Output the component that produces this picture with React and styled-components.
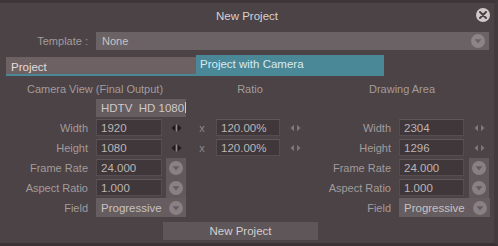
import React from "react";
import styled, { createGlobalStyle } from "styled-components";

const Global = createGlobalStyle`
  html, body { margin: 0; padding: 0; background: #3c3436; }
  body { font-family: "Liberation Sans", Arial, sans-serif; }
`;

const Window = styled.div`
  width: 498px;
  height: 246px;
  box-sizing: border-box;
  background: #4b4345;
  border-top: 3px solid #3d3537;
  border-right: 4px solid #423a3c;
  border-bottom: 3px solid #3a3234;
  display: flex;
  flex-direction: column;
  font-size: 11px;
  color: #a39b9c;
  overflow: hidden;
  & > * { flex-shrink: 0; }
`;

const TitleBar = styled.div`
  height: 25px;
  display: flex;
  align-items: center;
  justify-content: center;
  position: relative;
  color: #d8d0d0;
  font-size: 11.5px;
`;

const CloseBtn = styled.div`
  position: absolute;
  right: 4px;
  top: 5px;
  width: 14px;
  height: 14px;
  border-radius: 50%;
  background: #cfc9ca;
  display: flex;
  align-items: center;
  justify-content: center;
`;

const TemplateRow = styled.div`
  display: flex;
  align-items: center;
  height: 18px;
  margin-top: 4px;
`;

const Label = styled.div`
  width: ${(p) => p.$w || 96}px;
  box-sizing: border-box;
  padding-right: 8px;
  text-align: right;
  white-space: nowrap;
  color: #a39b9c;
`;

const TemplateField = styled.div`
  width: 393px;
  height: 18px;
  background: #6a6264;
  color: #c9c1c1;
  display: flex;
  align-items: center;
  justify-content: space-between;
  padding: 0 4px 0 6px;
  box-sizing: border-box;
`;

const Tabs = styled.div`
  display: flex;
  margin: 7px 0 0 6px;
  height: 19px;
`;

const Tab = styled.div`
  width: ${(p) => p.$w}px;
  box-sizing: border-box;
  display: flex;
  align-items: ${(p) => (p.$active ? "center" : "flex-end")};
  padding: ${(p) => (p.$active ? "0 0 2px 4px" : "0 0 1px 5px")};
  background: ${(p) => (p.$active ? "#4a8797" : "#6d6163")};
  color: ${(p) => (p.$active ? "#d6ebf1" : "#e4dcdc")};
  border-bottom: 2px solid #4a8797;
  font-size: 11.5px;
  margin-top: ${(p) => (p.$active ? "-2px" : "0")};
  height: ${(p) => (p.$active ? "21px" : "19px")};
`;

const Form = styled.div`
  display: grid;
  grid-template-columns: 96px 66px 28px 26px 64px 30px 89px 65px 30px;
  grid-auto-rows: 17px;
  grid-template-rows: 14px;
  row-gap: 3px;
  margin-top: 6px;
  align-items: center;
`;

const Header = styled.div`
  grid-column: ${(p) => p.$col};
  text-align: center;
  color: #a39b9c;
  white-space: nowrap;
`;

const FieldLabel = styled.div`
  grid-column: ${(p) => p.$col};
  text-align: right;
  padding-right: 8px;
  white-space: nowrap;
`;

const Input = styled.div`
  grid-column: ${(p) => p.$col};
  height: 17px;
  box-sizing: border-box;
  background: #3f3739;
  border: 1px solid #554d4f;
  border-top-color: #5e5658;
  color: #bdb5b5;
  display: flex;
  align-items: center;
  padding-left: 4px;
  font-size: 11.5px;
`;

const Preset = styled.div`
  grid-column: 2 / span 2;
  margin-right: 4px;
  height: 18px;
  background: #655d5f;
  color: #d0c8c8;
  display: flex;
  align-items: center;
  padding-left: 5px;
  font-size: 11.5px;
  white-space: pre;
`;

const Caret = styled.span`
  display: inline-block;
  width: 1px;
  height: 11px;
  background: #cfc7c7;
  margin-left: 1px;
`;

const Select = styled.div`
  grid-column: ${(p) => p.$col};
  margin-right: 4px;
  height: 19px;
  background: #655d5f;
  color: #c9c1c1;
  display: flex;
  align-items: center;
  justify-content: space-between;
  padding: 0 3px 0 5px;
  font-size: 11.5px;
`;

const DropBtn = styled.div`
  grid-column: ${(p) => p.$col};
  justify-self: center;
  width: 20px;
  height: 20px;
  background: #615a5c;
  display: flex;
  align-items: center;
  justify-content: center;
`;

const Ctrl = styled.div`
  grid-column: ${(p) => p.$col};
  display: flex;
  align-items: center;
  justify-content: center;
`;

const Times = styled.div`
  grid-column: 4;
  text-align: center;
  padding-right: 2px;
  color: #8f8789;
`;

const Spacer = styled.div`
  grid-column: ${(p) => p.$col};
`;

const Footer = styled.div`
  display: flex;
  padding-left: 163px;
  margin-top: 6px;
`;

const Button = styled.div`
  width: 155px;
  height: 18px;
  background: #5e5658;
  color: #d6cece;
  display: flex;
  align-items: center;
  justify-content: center;
  font-size: 11.5px;
`;

const CircleArrow = ({ size = 14, bg = "#8a8284", fg = "#5e5658" }) => (
  <svg width={size} height={size} viewBox="0 0 14 14">
    <circle cx="7" cy="7" r="7" fill={bg} />
    <path d="M3.6 5.2 L10.4 5.2 L7 9.4 Z" fill={fg} />
  </svg>
);

const Spin = ({ dark }) => (
  <svg width="11" height="8" viewBox="0 0 11 8">
    <path d="M0.5 4 L4 0.8 L4 7.2 Z" fill={dark ? "#211b1d" : "#7d7577"} />
    <path d="M10.5 4 L7 0.8 L7 7.2 Z" fill={dark ? "#211b1d" : "#7d7577"} />
    {dark && <rect x="5" y="0.5" width="1" height="7" fill="#8e8688" />}
  </svg>
);

const rowsLeft = [
  { label: "Width", value: "1920", ratio: "120.00%", rv: "2304" },
  { label: "Height", value: "1080", ratio: "120.00%", rv: "1296" },
];

export default function App() {
  return (
    <>
      <Global />
      <Window>
        <TitleBar>
          New Project
          <CloseBtn>
            <svg width="8" height="8" viewBox="0 0 8 8">
              <path d="M1 1 L7 7 M7 1 L1 7" stroke="#4b4345" strokeWidth="2" strokeLinecap="round" />
            </svg>
          </CloseBtn>
        </TitleBar>
        <TemplateRow>
          <Label>Template :</Label>
          <TemplateField>
            None
            <CircleArrow size={14} bg="#8c8486" fg="#6a6264" />
          </TemplateField>
        </TemplateRow>
        <Tabs>
          <Tab $w={190}>Project</Tab>
          <Tab $w={188} $active>Project with Camera</Tab>
        </Tabs>
        <Form>
          <Header $col="1 / span 3">Camera View (Final Output)</Header>
          <Header $col="4 / span 3">Ratio</Header>
          <Header $col="7 / span 3">Drawing Area</Header>

          <Spacer $col={1} />
          <Preset>
            HDTV  HD 1080
            <Caret />
          </Preset>
          <Spacer $col="4 / span 6" />

          {rowsLeft.map((r) => (
            <React.Fragment key={r.label}>
              <FieldLabel $col={1}>{r.label}</FieldLabel>
              <Input $col={2}>{r.value}</Input>
              <Ctrl $col={3}>
                <Spin dark />
              </Ctrl>
              <Times>x</Times>
              <Input $col={5}>{r.ratio}</Input>
              <Ctrl $col={6}>
                <Spin />
              </Ctrl>
              <FieldLabel $col={7}>{r.label}</FieldLabel>
              <Input $col={8}>{r.rv}</Input>
              <Ctrl $col={9}>
                <Spin />
              </Ctrl>
            </React.Fragment>
          ))}

          {[
            ["Frame Rate", "24.000"],
            ["Aspect Ratio", "1.000"],
          ].map(([l, v]) => (
            <React.Fragment key={l}>
              <FieldLabel $col={1}>{l}</FieldLabel>
              <Input $col={2}>{v}</Input>
              <DropBtn $col={3}>
                <CircleArrow size={14} bg="#888082" fg="#635b5d" />
              </DropBtn>
              <Spacer $col="4 / span 3" />
              <FieldLabel $col={7}>{l}</FieldLabel>
              <Input $col={8}>{v}</Input>
              <DropBtn $col={9}>
                <CircleArrow size={14} bg="#888082" fg="#635b5d" />
              </DropBtn>
            </React.Fragment>
          ))}

          <FieldLabel $col={1}>Field</FieldLabel>
          <Select $col="2 / span 2">
            Progressive
            <CircleArrow size={14} bg="#888082" fg="#635b5d" />
          </Select>
          <Spacer $col="4 / span 3" />
          <FieldLabel $col={7}>Field</FieldLabel>
          <Select $col="8 / span 2">
            Progressive
            <CircleArrow size={14} bg="#888082" fg="#635b5d" />
          </Select>
        </Form>
        <Footer>
          <Button>New Project</Button>
        </Footer>
      </Window>
    </>
  );
}
